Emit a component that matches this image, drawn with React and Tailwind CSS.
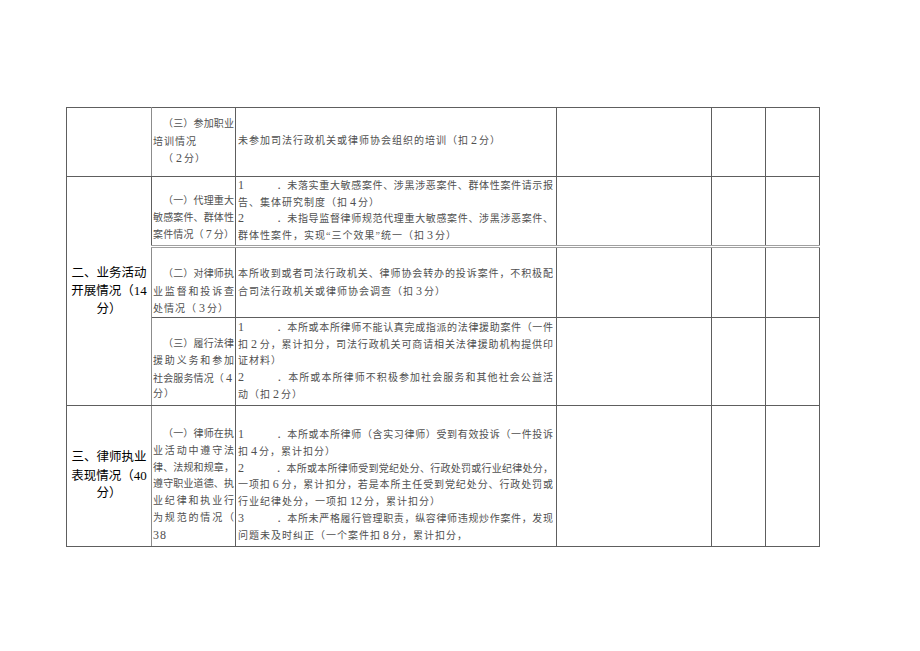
import React from "react";

// 律师事务所考核表（片段）
const cellText = "font-['Liberation_Serif','Noto_Sans_CJK_SC',serif] text-[10px] text-[#505050]";

const heights = {
    n: "h-[17.5px] leading-[17.5px]",
    s: "h-[16.5px] leading-[16.5px]",
    m: "h-[16.8px] leading-[16.8px]",
};

function Line({ j, indent, h = "n", children }) {
    return (
        <div
            className={
                heights[h] +
                " overflow-hidden whitespace-nowrap " +
                (j ? "text-justify [text-align-last:justify] " : "tracking-[1px] ") +
                (indent ? "pl-[10px]" : "")
            }
        >
            {children}
        </div>
    );
}

// 数字用稍大的衬线字
function D({ children }) {
    return <span className="text-[12px] px-[2px] tracking-normal">{children}</span>;
}

function Num({ n }) {
    return (
        <>
            <span className="text-[12px]">{n}</span>
            <span className="inline-block w-[32px]"></span>
        </>
    );
}

function Empty({ dbl }) {
    return (
        <td
            className={
                "border border-[#5e5e5e] p-0 " +
                (dbl ? "border-b-[3px] border-b-[#a0a0a0] border-double" : "")
            }
        ></td>
    );
}

export default function App() {
    return (
        <div className="w-[920px] h-[651px] bg-white overflow-hidden pt-[107px] pl-[66px]">
            <table className="table-fixed border-collapse w-[753px]">
                <colgroup>
                    <col className="w-[85px]" />
                    <col className="w-[84px]" />
                    <col className="w-[321px]" />
                    <col className="w-[155px]" />
                    <col className="w-[54px]" />
                    <col className="w-[54px]" />
                </colgroup>
                <tbody>
                    {/* (三) 参加职业培训 */}
                    <tr className="h-[69px]">
                        <td className="border border-[#5e5e5e] border-r-[#8c8c8c] p-0"></td>
                        <td className={"border border-[#5e5e5e] p-0 align-top " + cellText}>
                            <div className="pt-[7px] px-px h-[66px] overflow-hidden">
                                <Line j indent>（三）参加职业</Line>
                                <Line>培训情况</Line>
                                <Line indent>（<D>2</D>分）</Line>
                            </div>
                        </td>
                        <td className={"border border-[#5e5e5e] p-0 align-top " + cellText}>
                            <div className="pt-[24px] pl-[2px] pr-[3px] h-[66px] overflow-hidden">
                                <Line>未参加司法行政机关或律师协会组织的培训（扣<D>2</D>分）</Line>
                            </div>
                        </td>
                        <Empty />
                        <Empty />
                        <Empty />
                    </tr>

                    {/* 二、业务活动开展情况 — (一) */}
                    <tr className="h-[70px]">
                        <td
                            rowSpan={3}
                            className="border border-[#5e5e5e] border-r-[#8c8c8c] p-0 align-middle text-center font-['Liberation_Serif','Noto_Sans_CJK_SC',sans-serif] text-[12.5px] leading-[18px] text-black"
                        >
                            <div>二、业务活动</div>
                            <div>
                                开展情况（<span className="text-[13px]">14</span>
                            </div>
                            <div>分）</div>
                        </td>
                        <td className={"border border-[#5e5e5e] border-b-[3px] border-b-[#a0a0a0] border-double p-0 align-top " + cellText}>
                            <div className="pt-[16px] px-px h-[66px] overflow-hidden">
                                <Line h="s" j indent>（一）代理重大</Line>
                                <Line h="s" j>敏感案件、群体性</Line>
                                <Line h="s" j>案件情况（<D>7</D>分）</Line>
                            </div>
                        </td>
                        <td className={"border border-[#5e5e5e] border-b-[3px] border-b-[#a0a0a0] border-double p-0 align-top " + cellText}>
                            <div className="pl-[2px] pr-[3px] h-[66px] overflow-hidden">
                                <Line h="s" j>
                                    <Num n="1" />．未落实重大敏感案件、涉黑涉恶案件、群体性案件请示报
                                </Line>
                                <Line h="s">告、集体研究制度（扣<D>4</D>分）</Line>
                                <Line h="s" j>
                                    <Num n="2" />．未指导监督律师规范代理重大敏感案件、涉黑涉恶案件、
                                </Line>
                                <Line h="s">群体性案件，实现“三个效果”统一（扣<D>3</D>分）</Line>
                            </div>
                        </td>
                        <Empty dbl />
                        <Empty dbl />
                        <Empty dbl />
                    </tr>

                    {/* (二) 投诉查处 */}
                    <tr className="h-[71px]">
                        <td className={"border border-[#5e5e5e] p-0 align-top " + cellText}>
                            <div className="pt-[17px] px-px h-[68px] overflow-hidden">
                                <Line j indent>（二）对律师执</Line>
                                <Line j>业监督和投诉查</Line>
                                <Line>处情况（<D>3</D>分）</Line>
                            </div>
                        </td>
                        <td className={"border border-[#5e5e5e] p-0 align-top " + cellText}>
                            <div className="pt-[17px] pl-[2px] pr-[3px] h-[68px] overflow-hidden">
                                <Line j>本所收到或者司法行政机关、律师协会转办的投诉案件，不积极配</Line>
                                <Line>合司法行政机关或律师协会调查（扣<D>3</D>分）</Line>
                            </div>
                        </td>
                        <Empty />
                        <Empty />
                        <Empty />
                    </tr>

                    {/* (三) 法律援助与社会服务 */}
                    <tr className="h-[88px]">
                        <td className={"border border-[#5e5e5e] p-0 align-top " + cellText}>
                            <div className="pt-[18px] px-px h-[86px] overflow-hidden">
                                <Line h="m" j indent>（三）履行法律</Line>
                                <Line h="m" j>援助义务和参加</Line>
                                <Line h="m" j>
                                    社会服务情况（<D>4</D>
                                </Line>
                                <Line h="m">分）</Line>
                            </div>
                        </td>
                        <td className={"border border-[#5e5e5e] p-0 align-top " + cellText}>
                            <div className="pt-[1px] pl-[2px] pr-[3px] h-[86px] overflow-hidden">
                                <Line h="m" j>
                                    <Num n="1" />．本所或本所律师不能认真完成指派的法律援助案件（一件
                                </Line>
                                <Line h="m" j>扣<D>2</D>分，累计扣分，司法行政机关可商请相关法律援助机构提供印</Line>
                                <Line h="m">证材料）</Line>
                                <Line h="m" j>
                                    <Num n="2" />．本所或本所律师不积极参加社会服务和其他社会公益活
                                </Line>
                                <Line h="m">动（扣<D>2</D>分）</Line>
                            </div>
                        </td>
                        <Empty />
                        <Empty />
                        <Empty />
                    </tr>

                    {/* 三、律师执业表现情况 */}
                    <tr className="h-[141px]">
                        <td className="border border-[#5e5e5e] border-r-[#8c8c8c] p-0 align-middle text-center font-['Liberation_Serif','Noto_Sans_CJK_SC',sans-serif] text-[12.5px] leading-[17.5px] text-black">
                            <div>三、律师执业</div>
                            <div>
                                表现情况（<span className="text-[13px]">40</span>
                            </div>
                            <div>分）</div>
                        </td>
                        <td className={"border border-[#5e5e5e] p-0 align-top " + cellText}>
                            <div className="pt-[20px] px-px h-[138px] overflow-hidden">
                                <Line h="m" j indent>（一）律师在执</Line>
                                <Line h="m" j>业活动中遵守法</Line>
                                <Line h="m" j>律、法规和规章，</Line>
                                <Line h="m" j>遵守职业道德、执</Line>
                                <Line h="m" j>业纪律和执业行</Line>
                                <Line h="m" j>为规范的情况（</Line>
                                <Line h="m">
                                    <span className="text-[12px]">38</span>
                                </Line>
                            </div>
                        </td>
                        <td className={"border border-[#5e5e5e] p-0 align-top " + cellText}>
                            <div className="pt-[20px] pl-[2px] pr-[3px] h-[138px] overflow-hidden">
                                <Line h="m" j>
                                    <Num n="1" />．本所或本所律师（含实习律师）受到有效投诉（一件投诉
                                </Line>
                                <Line h="m">扣<D>4</D>分，累计扣分）</Line>
                                <Line h="m" j>
                                    <Num n="2" />．本所或本所律师受到党纪处分、行政处罚或行业纪律处分，
                                </Line>
                                <Line h="m" j>一项扣<D>6</D>分，累计扣分，若是本所主任受到党纪处分、行政处罚或</Line>
                                <Line h="m">行业纪律处分，一项扣<D>12</D>分，累计扣分）</Line>
                                <Line h="m" j>
                                    <Num n="3" />．本所未严格履行管理职责，纵容律师违规炒作案件，发现
                                </Line>
                                <Line h="m">问题未及时纠正（一个案件扣<D>8</D>分，累计扣分，</Line>
                            </div>
                        </td>
                        <Empty />
                        <Empty />
                        <Empty />
                    </tr>
                </tbody>
            </table>
        </div>
    );
}
